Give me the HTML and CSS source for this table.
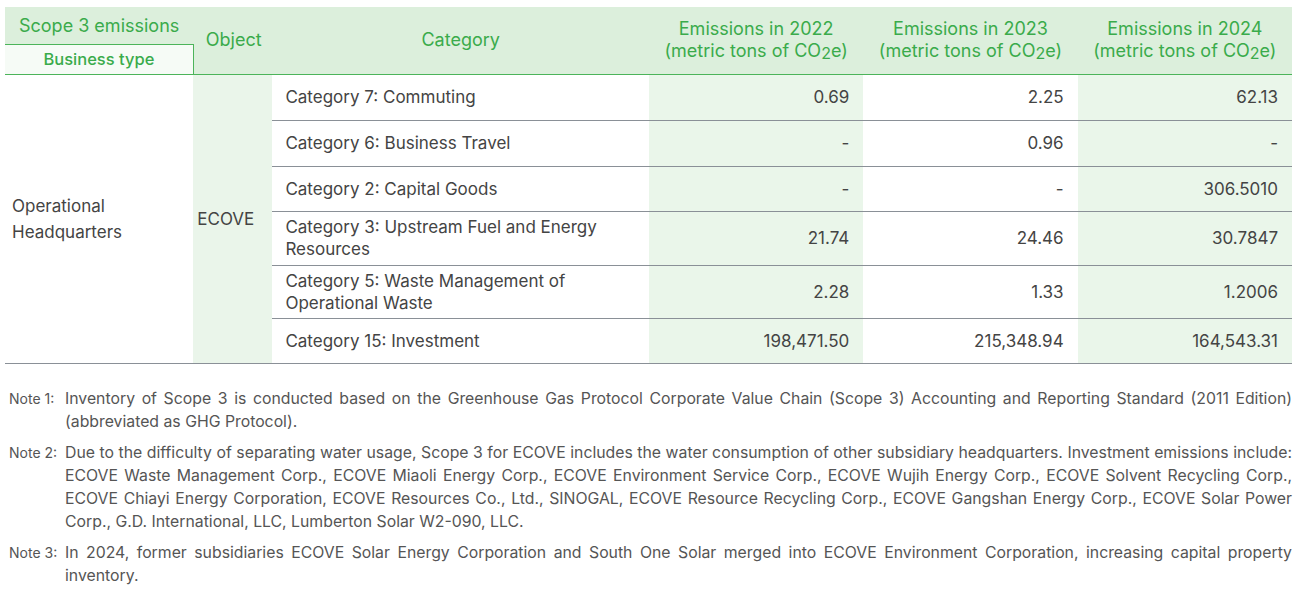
FILE: index.html
```html
<!DOCTYPE html>
<html lang="en">
<head>
<meta charset="utf-8">
<title>Scope 3 emissions</title>
<link rel="stylesheet" href="styles.css">
</head>
<body>
<div class="page">
  <table class="emis">
    <colgroup>
      <col class="c-bt"><col class="c-obj"><col class="c-cat"><col class="c-y"><col class="c-y"><col class="c-y">
    </colgroup>
    <thead>
      <tr class="h1">
        <th class="scope">Scope 3 emissions</th>
        <th rowspan="2" class="obj-h">Object</th>
        <th rowspan="2">Category</th>
        <th rowspan="2">Emissions in 2022<br>(metric tons of CO<sub>2</sub>e)</th>
        <th rowspan="2">Emissions in 2023<br>(metric tons of CO<sub>2</sub>e)</th>
        <th rowspan="2">Emissions in 2024<br>(metric tons of CO<sub>2</sub>e)</th>
      </tr>
      <tr class="h2">
        <th class="btype">Business type</th>
      </tr>
    </thead>
    <tbody>
      <tr class="r1">
        <td rowspan="6" class="bt">Operational<br>Headquarters</td>
        <td rowspan="6" class="obj">ECOVE</td>
        <td class="cat">Category 7: Commuting</td>
        <td class="num g">0.69</td>
        <td class="num">2.25</td>
        <td class="num g">62.13</td>
      </tr>
      <tr class="r2">
        <td class="cat">Category 6: Business Travel</td>
        <td class="num g">-</td>
        <td class="num">0.96</td>
        <td class="num g">-</td>
      </tr>
      <tr class="r3">
        <td class="cat">Category 2: Capital Goods</td>
        <td class="num g">-</td>
        <td class="num">-</td>
        <td class="num g">306.5010</td>
      </tr>
      <tr class="r4">
        <td class="cat">Category 3: Upstream Fuel and Energy Resources</td>
        <td class="num g">21.74</td>
        <td class="num">24.46</td>
        <td class="num g">30.7847</td>
      </tr>
      <tr class="r5">
        <td class="cat">Category 5: Waste Management of Operational Waste</td>
        <td class="num g">2.28</td>
        <td class="num">1.33</td>
        <td class="num g">1.2006</td>
      </tr>
      <tr class="r6">
        <td class="cat">Category 15: Investment</td>
        <td class="num g">198,471.50</td>
        <td class="num">215,348.94</td>
        <td class="num g">164,543.31</td>
      </tr>
    </tbody>
  </table>

  <div class="notes">
    <div class="note"><span class="lbl">Note 1:</span><p>Inventory of Scope 3 is conducted based on the Greenhouse Gas Protocol Corporate Value Chain (Scope 3) Accounting and Reporting Standard (2011 Edition) (abbreviated as GHG Protocol).</p></div>
    <div class="note"><span class="lbl">Note 2:</span><p>Due to the difficulty of separating water usage, Scope 3 for ECOVE includes the water consumption of other subsidiary headquarters. Investment emissions include: ECOVE Waste Management Corp., ECOVE Miaoli Energy Corp., ECOVE Environment Service Corp., ECOVE Wujih Energy Corp., ECOVE Solvent Recycling Corp., ECOVE Chiayi Energy Corporation, ECOVE Resources Co., Ltd., SINOGAL, ECOVE Resource Recycling Corp., ECOVE Gangshan Energy Corp., ECOVE Solar Power Corp., G.D. International, LLC, Lumberton Solar W2-090, LLC.</p></div>
    <div class="note"><span class="lbl">Note 3:</span><p>In 2024, former subsidiaries ECOVE Solar Energy Corporation and South One Solar merged into ECOVE Environment Corporation, increasing capital property inventory.</p></div>
  </div>
</div>
</body>
</html>
```

FILE: styles.css
```css
html, body {
  margin: 0;
  padding: 0;
  background: #ffffff;
}
body {
  font-family: "Inter", "Lato", sans-serif;
  color: #444444;
}
.page {
  padding: 7px 15px 0 5px;
}
.emis {
  width: 1287px;
  border-collapse: collapse;
  table-layout: fixed;
  font-size: 17px;
  line-height: 22px;
}
.c-bt { width: 188px; }
.c-obj { width: 79px; }
.c-cat { width: 376px; }
.c-y { width: 214px; }

.emis thead th {
  background: #dcefdc;
  color: #3aab4b;
  font-weight: 400;
  font-size: 18px;
  text-align: center;
  padding: 0;
  vertical-align: middle;
  border-bottom: 1px solid #4cb45a;
}
.emis thead th sub {
  font-size: 16px;
  vertical-align: baseline;
  position: relative;
  top: 2px;
  letter-spacing: 0;
}
.h1 { height: 37px; }
.h2 { height: 30px; }
.emis thead th.scope {
  border-bottom: 1px solid #4cb45a;
  padding-top: 2px;
}
.emis thead th.btype {
  background: #f6fbf6;
  border-right: 1px solid #4cb45a;
  font-weight: 500;
  font-size: 16.5px;
}
.emis thead th.obj-h {
  text-align: left;
  padding-left: 12px;
}
.emis tbody td {
  padding: 0 14px 0 13px;
  vertical-align: middle;
}
.emis tbody td.bt {
  padding-left: 7px;
  line-height: 26px;
  border-bottom: 1px solid #8a9097;
}
.emis tbody td.obj {
  background: #eaf5ea;
  padding-left: 4px;
  padding-right: 0;
  border-bottom: 1px solid #8a9097;
}
.emis tbody td.cat,
.emis tbody td.num {
  border-bottom: 1px solid #8a9097;
}
.emis tbody td.num {
  text-align: right;
}
.emis tbody td.g {
  background: #eaf6ea;
}
.r1 { height: 46px; }
.r2 { height: 46px; }
.r3 { height: 45px; }
.r4 { height: 54px; }
.r5 { height: 53px; }
.r6 { height: 45px; }

.notes {
  margin-top: 23px;
  padding-left: 4px;
  display: flex;
  flex-direction: column;
  gap: 8px;
  color: #555555;
}
.note {
  display: flex;
  align-items: flex-start;
}
.lbl {
  flex: 0 0 56px;
  font-size: 14px;
  line-height: 23px;
  color: #555555;
}
.note p {
  margin: 0;
  flex: 1;
  font-size: 15.8px;
  line-height: 23px;
  text-align: justify;
}
```
